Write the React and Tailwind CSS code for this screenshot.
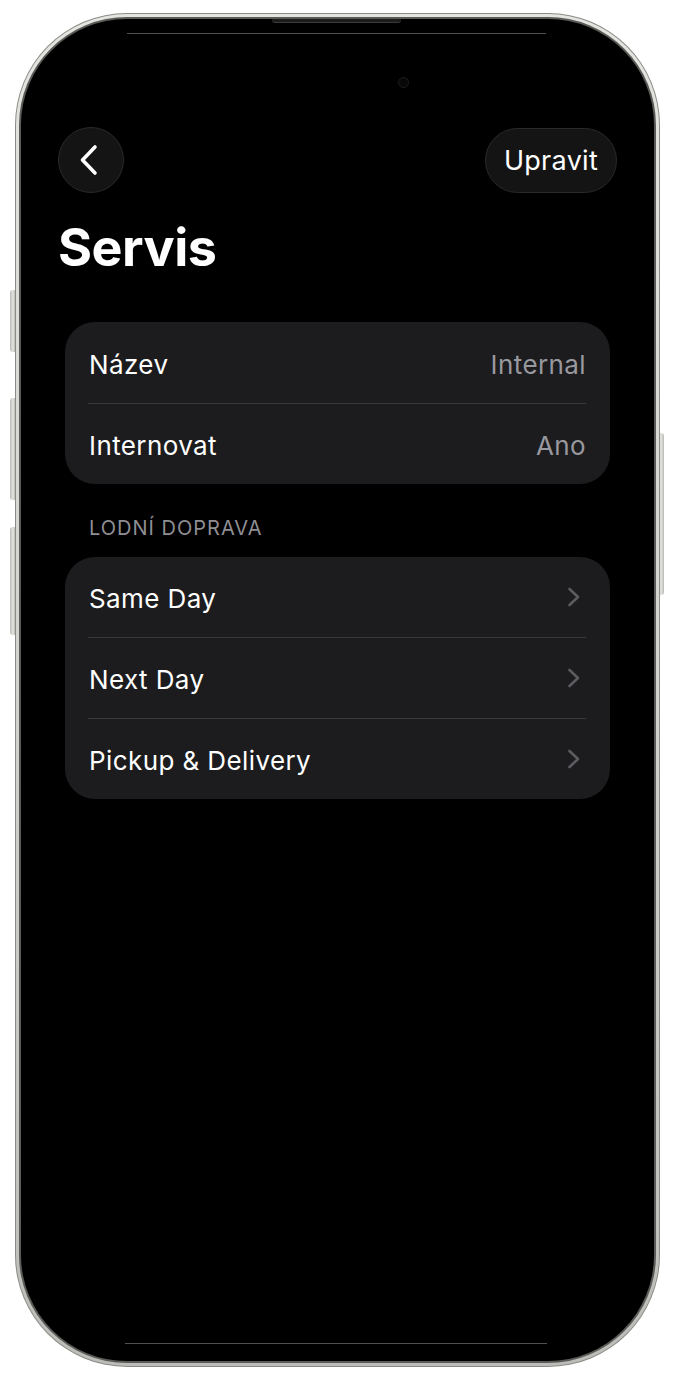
import React from "react";

function ChevronLeft() {
  return (
    <svg width="22" height="32" viewBox="0 0 22 32" fill="none">
      <path d="M17 3 L4.5 16 L17 29" stroke="#ffffff" strokeWidth="3.6" strokeLinecap="round" strokeLinejoin="round" />
    </svg>
  );
}

function ChevronRight() {
  return (
    <svg width="14" height="20" viewBox="0 0 14 20" fill="none">
      <path d="M2.5 2 L11 10 L2.5 18" stroke="#5c5c60" strokeWidth="2.6" strokeLinecap="round" strokeLinejoin="round" />
    </svg>
  );
}

function Divider() {
  return <div className="h-px bg-[#38383a] ml-[23px] mr-[24px]" />;
}

function ValueRow({ label, value, tall }) {
  return (
    <div className={`flex items-center justify-between px-[24px] pt-[3px] ${tall ? "h-[81px]" : "h-[80px]"}`}>
      <span className="text-[26px] tracking-[0.4px] text-white">{label}</span>
      <span className="text-[26px] tracking-[0.4px] text-[#98989f]">{value}</span>
    </div>
  );
}

function LinkRow({ label }) {
  return (
    <div className="flex items-center justify-between pl-[24px] pr-[29px] h-[80px]">
      <span className="text-[26px] tracking-[0.4px] text-white pt-[2px]">{label}</span>
      <ChevronRight />
    </div>
  );
}

export default function App() {
  return (
    <div className="relative w-[675px] h-[1380px] bg-white overflow-hidden font-['Inter',sans-serif]">
      {/* side buttons */}
      <div className="absolute left-[10px] top-[290px] w-[6px] h-[62px] rounded-l-[3px] bg-gradient-to-r from-[#b8b8b4] via-[#e6e6e2] to-[#a4a4a0]" />
      <div className="absolute left-[10px] top-[398px] w-[6px] h-[102px] rounded-l-[3px] bg-gradient-to-r from-[#b8b8b4] via-[#e6e6e2] to-[#a4a4a0]" />
      <div className="absolute left-[10px] top-[527px] w-[6px] h-[108px] rounded-l-[3px] bg-gradient-to-r from-[#b8b8b4] via-[#e6e6e2] to-[#a4a4a0]" />
      <div className="absolute left-[658px] top-[433px] w-[6px] h-[162px] rounded-r-[3px] bg-gradient-to-r from-[#a4a4a0] via-[#e6e6e2] to-[#b8b8b4]" />

      <div className="pt-[13px] pl-[15px]">
        <div className="relative w-[645px] h-[1354px] rounded-[112px] p-px bg-[#8a8a86]">
          <div className="h-full rounded-[111px] p-[3px] bg-gradient-to-b from-[#e4e4e0] via-[#d2d2ce] to-[#bcbcb8]">
            <div className="h-full rounded-[108px] p-[2px] bg-[#5a5a58]">
              <div className="relative h-full rounded-[106px] bg-black overflow-hidden">
                {/* decorative edge details */}
                <div className="absolute top-0 left-[251px] w-[129px] h-[4px] rounded-b-[3px] bg-[#1c1c1c] border-b border-[#3a3a3a]" />
                <div className="absolute top-[14px] left-[106px] w-[419px] h-px bg-[#505050]" />
                <div className="absolute top-[1324px] left-[104px] w-[422px] h-px bg-[#505050]" />
                <div className="absolute top-[58px] left-[377px] w-[11px] h-[11px] rounded-full bg-[#080808] border border-[#1e1e1e]" />

                <div className="pt-[108px]">
                  <div className="flex items-center justify-between px-[37px]">
                    <div className="w-[66px] h-[66px] rounded-full bg-[#141414] border border-[#2a2a2a] flex items-center justify-center pr-[4px]">
                      <ChevronLeft />
                    </div>
                    <div className="w-[132px] h-[65px] rounded-full bg-[#141414] border border-[#2a2a2a] flex items-center justify-center">
                      <span className="text-[27px] tracking-[0.3px] text-white leading-none">Upravit</span>
                    </div>
                  </div>

                  <h1 className="mt-[29px] pl-[37px] text-[52px] leading-[52px] font-bold text-white tracking-[-0.5px]">Servis</h1>

                  <div className="mx-[44px] mt-[48px] rounded-[30px] bg-[#1c1c1e] overflow-hidden">
                    <ValueRow label="Název" value="Internal" tall />
                    <Divider />
                    <ValueRow label="Internovat" value="Ano" />
                  </div>

                  <div className="mx-[44px] mt-[32px] pl-[24px] text-[20px] leading-[24px] text-[#8e8e93] tracking-[1px]">LODNÍ DOPRAVA</div>

                  <div className="mx-[44px] mt-[17px] rounded-[30px] bg-[#1c1c1e] overflow-hidden">
                    <LinkRow label="Same Day" />
                    <Divider />
                    <LinkRow label="Next Day" />
                    <Divider />
                    <LinkRow label="Pickup & Delivery" />
                  </div>
                </div>
              </div>
            </div>
          </div>
        </div>
      </div>
    </div>
  );
}
